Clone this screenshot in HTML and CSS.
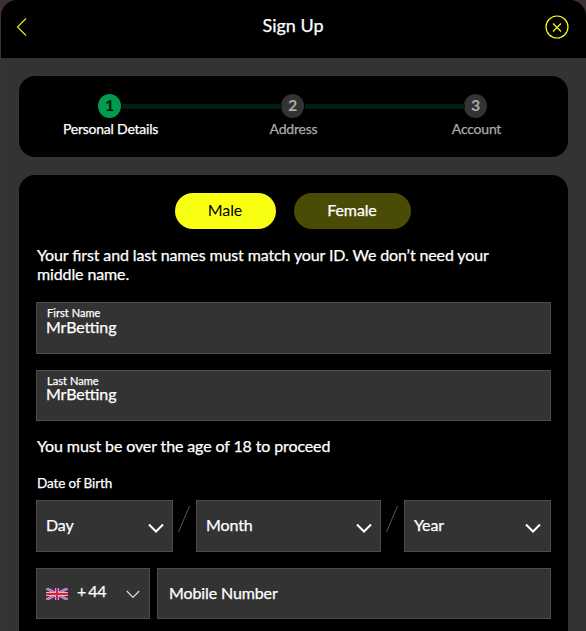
FILE: index.html
```
<!DOCTYPE html>
<html lang="en">
<head>
    <meta charset="UTF-8">
    <meta name="viewport" content="width=device-width, initial-scale=1.0">
    <title>Sign Up</title>
    <link rel="stylesheet" href="styles.css">
</head>
<body>
    <div class="modal">
        <header class="header">
            <svg class="back" width="12" height="20" viewBox="0 0 12 20"><path d="M10 1.500L1.500 10L10 18.500"/></svg>
            <h1>Sign Up</h1>
            <svg class="close" width="24" height="24" viewBox="0 0 24 24"><circle cx="12" cy="12" r="11"/><path d="M8 8.500l8 8M16 8.500l-8 8"/></svg>
        </header>

        <div class="steps">
            <div class="step active"><span class="number">1</span><span class="label">Personal Details</span></div>
            <div class="step"><span class="number">2</span><span class="label">Address</span></div>
            <div class="step"><span class="number">3</span><span class="label">Account</span></div>
        </div>

        <form class="form">
            <div class="gender">
                <button type="button" class="male">Male</button>
                <button type="button" class="female">Female</button>
            </div>
            <p class="note">Your first and last names must match your ID. We don’t need your middle name.</p>

            <div class="field name-field"><label>First Name</label><span class="value">MrBetting</span></div>
            <div class="field name-field last"><label>Last Name</label><span class="value">MrBetting</span></div>

            <p class="age">You must be over the age of 18 to proceed</p>
            <p class="dob-label">Date of Birth</p>

            <div class="dob">
                <div class="field select day"><span>Day</span><svg width="16" height="11" viewBox="0 0 16 11"><path d="M1 1.500l7 7l7-7"/></svg></div>
                <svg class="slash" width="23" height="52" viewBox="0 0 23 52"><path d="M5.500 32L16.500 6"/></svg>
                <div class="field select month"><span>Month</span><svg width="16" height="11" viewBox="0 0 16 11"><path d="M1 1.500l7 7l7-7"/></svg></div>
                <svg class="slash" width="23" height="52" viewBox="0 0 23 52"><path d="M5.500 32L16.500 6"/></svg>
                <div class="field select year"><span>Year</span><svg width="16" height="11" viewBox="0 0 16 11"><path d="M1 1.500l7 7l7-7"/></svg></div>
            </div>

            <div class="phone">
                <div class="field code">
                    <svg class="flag" width="22" height="12" viewBox="0 0 22 12">
                        <rect width="22" height="12" fill="#1e3484"/>
                        <path d="M0 0L22 12M22 0L0 12" stroke="#d9b4c8" stroke-width="2.600"/>
                        <path d="M0 0L22 12M22 0L0 12" stroke="#d6475e" stroke-width="1"/>
                        <path d="M11 0V12M0 6H22" stroke="#e8b4c4" stroke-width="3.800"/>
                        <path d="M11 0V12M0 6H22" stroke="#d9203e" stroke-width="2.200"/>
                    </svg>
                    <span class="prefix"><span class="plus">+</span>44</span>
                    <svg class="chevron" width="14" height="9" viewBox="0 0 14 9"><path d="M.8 1l6.200 6.500L13.200 1"/></svg>
                </div>
                <div class="field mobile">Mobile Number</div>
            </div>
        </form>
    </div>
</body>
</html>
```
FILE: styles.css
```
* {
    box-sizing: border-box;
}
body {
    margin: 0;
    height: 631px;
    overflow: hidden;
    background-color: #3b3033;
    font-family: Lato, sans-serif;
    font-size: 16px;
    letter-spacing: -0.12px;
    font-feature-settings: "liga" 1;
    -webkit-text-stroke: 0.25px;
    color: #fff;
}
.modal {
    height: 631px;
    margin-left: 1px;
    background-color: #333;
    border-radius: 16px 16px 0 0;
    overflow: hidden;
}
.header {
    display: flex;
    justify-content: space-between;
    height: 58px;
    padding: 15px 17px 0 15px;
    background-color: #000;
}
h1 {
    margin: -1px 0 0 1px;
    font-size: 18px;
    line-height: 22px;
    font-weight: 400;
    letter-spacing: 0;
}
svg {
    fill: none;
    flex-shrink: 0;
}
.back {
    margin: 2px 12px 0 0;
    stroke: #e6ea14;
    stroke-width: 1.2;
}
.close {
    stroke: #f8ff13;
    stroke-width: 1.2;
}
.steps {
    display: flex;
    height: 81px;
    margin: 18px 18px 0;
    padding-top: 18px;
    background-color: #000;
    border-radius: 16px;
}
.step {
    position: relative;
    flex: 1;
    display: flex;
    flex-direction: column;
    align-items: center;
    color: #aaa;
}
.step + .step::before {
    content: "";
    position: absolute;
    top: 10px;
    right: calc(50% + 12px);
    width: 160px;
    height: 5px;
    background-color: #00200f;
}
.number {
    width: 23px;
    height: 24px;
    margin-right: 2px;
    border-radius: 50%;
    background-color: #333;
    font-weight: bold;
    line-height: 21px;
    text-align: center;
    -webkit-text-stroke: 0;
}
.label {
    margin-top: 2px;
    font-size: 14px;
    line-height: 17px;
    letter-spacing: -0.22px;
}
.active {
    color: #fff;
}
.active .number {
    background-color: #009b4c;
    color: #001a0c;
}
.form {
    height: 480px;
    margin: 18px 18px 0;
    padding: 18px 17px 0;
    background-color: #000;
    border-radius: 16px 16px 0 0;
}
.gender {
    display: flex;
    justify-content: center;
    gap: 18px;
    margin-right: 2px;
}
button {
    height: 36px;
    padding: 0 0 3px;
    border: none;
    border-radius: 18px;
    font: inherit;
    letter-spacing: inherit;
}
.male {
    width: 101px;
    background-color: #f9ff13;
    color: #000;
    -webkit-text-stroke: 0;
}
.female {
    width: 117px;
    background-color: #4a4b05;
    color: #fff;
}
p {
    margin: 0;
}
.note {
    margin: 16px 0 19px;
    padding: 0 40px 0 1px;
    line-height: 19px;
}
.field {
    border: 1px solid #4d4d4d;
    background-color: #333;
}
.name-field {
    display: flex;
    flex-direction: column;
    height: 52px;
    padding: 3px 9px;
}
.name-field.last {
    height: 51px;
    margin-top: 16px;
}
.name-field label {
    padding-left: 1px;
    font-size: 11px;
    line-height: 13px;
    letter-spacing: 0.05px;
}
.value {
    line-height: 15px;
}
.last .value {
    line-height: 14px;
}
.age {
    margin-top: 15px;
    padding-left: 1px;
    line-height: 19px;
}
.dob-label {
    margin-top: 20px;
    padding-left: 1px;
    font-size: 13.500px;
    line-height: 17px;
}
.dob {
    display: flex;
    margin-top: 8px;
}
.select {
    display: flex;
    justify-content: space-between;
    height: 52px;
    padding: 14px 8px 0 9px;
    line-height: 19px;
}
.select svg {
    margin-top: 8px;
    stroke: #fff;
    stroke-width: 2;
}
.day {
    width: 137px;
}
.month {
    width: 185px;
}
.year {
    width: 147px;
}
.year svg {
    margin-right: 1px;
}
.slash {
    stroke: #555;
}
.phone {
    display: flex;
    gap: 7px;
    margin-top: 16px;
}
.code {
    display: flex;
    width: 114px;
    height: 51px;
    padding: 12px 9px 0;
}
.flag {
    margin-top: 7px;
}
.prefix {
    margin-left: 9px;
    line-height: 20px;
}
.plus {
    margin-right: 2px;
}
.chevron {
    margin: 9px 0 0 auto;
    stroke: #ddd;
    stroke-width: 1.2;
}
.mobile {
    flex: 1;
    padding: 14px 11px 0;
    line-height: 20px;
}
```
